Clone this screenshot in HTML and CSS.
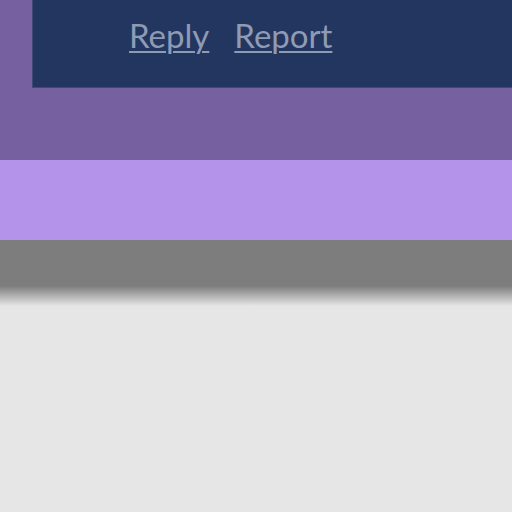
FILE: index.html
```html
<!DOCTYPE html>
<html>
<head>
<meta charset="utf-8">
<link rel="stylesheet" href="styles.css">
</head>
<body>
<div class="top">
  <div class="card">
    <div class="actions">
      <a class="link" href="#">Reply</a>
      <a class="link" href="#">Report</a>
    </div>
  </div>
</div>
<div class="band-light"></div>
<div class="band-gray"></div>
<div class="band-fade"></div>
</body>
</html>
```
FILE: styles.css
```css
html, body {
  margin: 0;
  padding: 0;
  background: #e6e6e6;
}
.top {
  background: #7660a0;
  height: 160px;
  padding-left: 32px;
  box-sizing: border-box;
}
.card {
  background: #23365f;
  height: 88px;
  border-left: 1px solid #3d4a78;
  border-bottom: 1px solid #3d4a78;
  box-sizing: border-box;
}
.actions {
  display: flex;
  gap: 25px;
  padding-left: 96px;
  padding-top: 13px;
}
.link {
  font-family: Lato, "Noto Sans", sans-serif;
  font-size: 33px;
  line-height: 45px;
  color: #8f9bb5;
  text-decoration: underline;
  text-decoration-thickness: 2px;
  text-underline-offset: 3px;
}
.band-light {
  background: #b494eb;
  height: 80px;
}
.band-gray {
  background: #7d7d7d;
  height: 46px;
}
.band-fade {
  height: 20px;
  background: linear-gradient(#7d7d7d, #e6e6e6);
}
```
